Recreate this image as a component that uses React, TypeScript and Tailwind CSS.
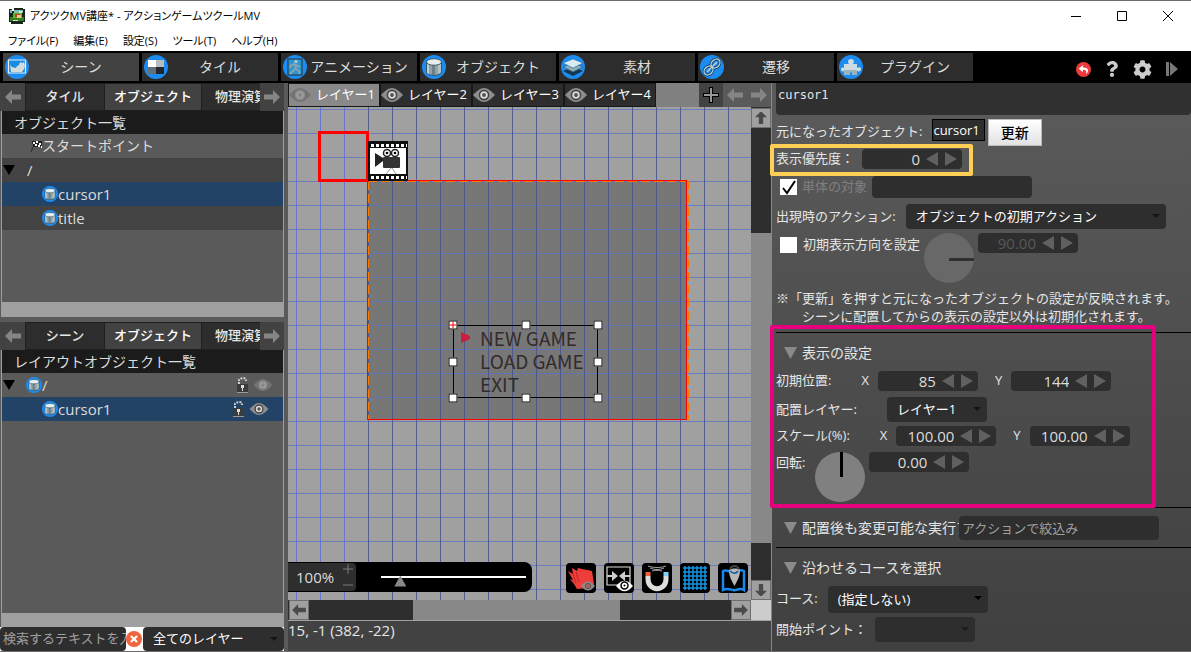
import { ReactNode, useState } from "react";
import { Minus, Plus, X } from "lucide-react";
import { FaCog, FaPuzzlePiece, FaQuestion, FaReply } from "react-icons/fa";

const TREE_ROW = "flex h-6 items-center pl-px text-[15px]";

function AppLogo() {
  return (
    <svg viewBox="0 0 16 16" className="size-4" shapeRendering="crispEdges">
      <path fill="#18251c" d="M0 1h3v2h2V0h9v1h2v13h-2v2H2v-2H0z" />
      <path fill="#7dbcae" d="M1 2h2v3h2V2h9v3H1z" />
      <path fill="#35801f" d="M1 9h14v4H1z" />
      <path fill="#63b52d" d="M4 5h9v5H4z" />
      <path fill="#c73a22" d="M6 6h5v3H6z" />
      <path fill="#f2c991" d="M8 7h4v3H8z" />
      <path fill="#e7e3c8" d="M10 3h3v2h-3zM4 12h5v1H4z" />
    </svg>
  );
}

function Cylinder({ className }: { className: string }) {
  return (
    <svg viewBox="0 0 24 24" className={className}>
      <circle cx="12" cy="12" r="12" fill="#1d8cf0" />
      <path d="M4.500 7v10c0 4.500 15 4.500 15 0V7z" fill="#8fa3a9" stroke="#2b4656" strokeWidth=".8" />
      <path d="M5 9v8c0 1 1 1.700 2 2V9.500z" fill="#c3d0d3" />
      <path d="M10 10v10h3V10z" fill="#6c8087" />
      <path d="M16 10v9l3-2V8z" fill="#b4c3c7" />
      <ellipse cx="12" cy="7" rx="7.500" ry="3.200" fill="#e6eef0" stroke="#2b4656" strokeWidth=".8" />
    </svg>
  );
}

function Disc({ children }: { children: ReactNode }) {
  return (
    <svg viewBox="0 0 24 24" className="size-6 shrink-0">
      <circle cx="12" cy="12" r="12" fill="#1d8cf0" />
      {children}
    </svg>
  );
}

function Eye({ className = "h-[14px] w-5", dim = false }: { className?: string; dim?: boolean }) {
  return (
    <svg viewBox="0 0 22 14" className={className}>
      <path d="M0 7C4 3 7 0 11 0s7 3 11 7c-4 4-7 7-11 7S4 11 0 7z" fill={dim ? "#747474" : "#8d8d8d"} />
      <circle cx="11" cy="7" r="4.500" fill={dim ? "#9c9c9c" : "#dcdcdc"} stroke={dim ? "#8a8a8a" : "#3a3a3a"} strokeWidth="1.400" />
      <circle cx="11" cy="7" r="2" fill={dim ? "#868686" : "#555"} />
    </svg>
  );
}

function Lock() {
  return (
    <svg viewBox="0 0 13 16" className="h-4 w-[13px]">
      <path d="M3 7V3c0-2 7-3 7 0v1" fill="none" stroke="#cfcfcf" strokeWidth="2" strokeDasharray="2 1" />
      <path d="M1 7h11v8H1z" fill="#3b3b3b" />
      <path d="M1 15.500h11" stroke="#999" />
      <path d="M5 8h3v3H7v3H6v-3H5z" fill="#ddd" />
    </svg>
  );
}

function BlockArrow({ className, rotate = 0 }: { className: string; rotate?: number }) {
  return (
    <svg viewBox="0 0 16 14" className={className}>
      <path d="M16 4.500v5H7V14L0 7l7-7v4.500z" fill="currentColor" transform={`rotate(${rotate} 8 7)`} />
    </svg>
  );
}

const MODES = [
  {
    label: "シーン",
    icon: (
      <Disc>
        <path d="M3.500 5h17v13h-17z" fill="#168ce4" stroke="#e7edf0" strokeWidth="1.200" />
        <path d="M5 10l2 2 4 1 1-2 2-1 1-3 2 1 2-1 1 4-1 3-2 3H6z" fill="#d5dadb" />
      </Disc>
    ),
  },
  {
    label: "タイル",
    icon: (
      <Disc>
        <path d="M4 5h8v7H4z" fill="#fff" />
        <path d="M12 5h8v7h-8z" fill="#b9bdc0" />
        <path d="M4 12h8v7H4z" fill="#647078" />
        <path d="M12 12h8v7h-8z" fill="#20282e" />
      </Disc>
    ),
  },
  {
    label: "アニメーション",
    icon: (
      <Disc>
        <path d="M5 4h14v16H5z" fill="#2596d8" stroke="#24506f" strokeWidth="1.500" />
        <circle cx="13" cy="6.500" r="1.800" fill="#b0c4c8" />
        <path d="M12 9l-4 1-1 3M12 9l1 5 3 2v3M13 13l-3 3-3 3M13 10l4 2" fill="none" stroke="#89a4ac" strokeWidth="2" />
      </Disc>
    ),
  },
  { label: "オブジェクト", icon: <Cylinder className="size-6 shrink-0" /> },
  {
    label: "素材",
    icon: (
      <Disc>
        <path d="M2 16l10-4 10 4-10 5z" fill="#15364f" />
        <path d="M2 12l10-4 10 4-10 5z" fill="#8fa9b5" stroke="#1d5c8c" strokeWidth=".6" />
        <path d="M2 8l10-4 10 4-10 5z" fill="#dcebf1" stroke="#1d6cac" strokeWidth=".6" />
      </Disc>
    ),
  },
  {
    label: "遷移",
    icon: (
      <Disc>
        <g fill="none" stroke="#123e60" strokeWidth="3">
          <ellipse cx="15.500" cy="8.500" rx="5" ry="3.800" transform="rotate(-45 15.500 8.500)" />
          <ellipse cx="8.500" cy="15.500" rx="5" ry="3.800" transform="rotate(-45 8.500 15.500)" />
        </g>
        <g fill="none" stroke="#b9d0da" strokeWidth="1.400">
          <ellipse cx="15.500" cy="8.500" rx="5" ry="3.800" transform="rotate(-45 15.500 8.500)" />
          <ellipse cx="8.500" cy="15.500" rx="5" ry="3.800" transform="rotate(-45 8.500 15.500)" />
          <path d="M7 17L17 7" />
        </g>
      </Disc>
    ),
  },
  {
    label: "プラグイン",
    icon: (
      <Disc>
        <path
          d="M5 9h5c-1-1-2-5 2-5s3 4 2 5h4v4c2-1 4-1 4 1s-2 3-4 2v4h-5c1-2 0-3-1-3s-2 1-1 3H5v-4c-2 1-3 0-3-1.500S3 12 5 13z"
          fill="#cddce1"
        />
        <path d="M5 15h13v5h-5c1-2 0-3-1-3s-2 1-1 3H5z" fill="#9db3bb" />
      </Disc>
    ),
  },
];

function TabStrip({ first }: { first: string }) {
  return (
    <div className="flex h-7 shrink-0 bg-[#1c2022] text-[13px] font-medium text-[#e6e6e6]">
      <button aria-label="前へ" className="flex w-[25px] shrink-0 items-center justify-center bg-[#424242] text-[#858585]">
        <BlockArrow className="h-[14px] w-4" />
      </button>
      <div className="flex min-w-0 flex-1 gap-px overflow-hidden py-px pl-px">
        <button className="w-[78px] shrink-0 bg-[#2d2d2d]">{first}</button>
        <button className="w-24 shrink-0 bg-[#424242] text-white">オブジェクト</button>
        <button className="w-[78px] shrink-0 bg-[#2d2d2d] whitespace-nowrap">物理演算</button>
      </div>
      <button aria-label="次へ" className="flex w-6 shrink-0 items-center justify-center bg-[#424242] text-[#858585]">
        <BlockArrow className="h-[14px] w-4" rotate={180} />
      </button>
    </div>
  );
}

function Twisty() {
  return (
    <svg viewBox="0 0 12 10" className="h-[10px] w-3 shrink-0">
      <path d="M0 0h12L6 10z" />
    </svg>
  );
}

function Select({
  label,
  id,
  value,
  className,
  arrow = "#141414",
}: {
  label?: string;
  id?: string;
  value: string;
  className: string;
  arrow?: string;
}) {
  return (
    <span className={`relative flex ${className}`}>
      <select
        id={id}
        aria-label={label}
        className="w-full appearance-none rounded bg-[#2e2e2e] pr-5 pl-[10px] text-[13px] text-white"
      >
        <option>{value}</option>
      </select>
      <svg viewBox="0 0 8 4" className="pointer-events-none absolute top-[10px] right-[6px] h-1 w-2">
        <path d="M0 0h8L4 4z" fill={arrow} />
      </svg>
    </span>
  );
}

function LeftPanel() {
  return (
    <aside className="flex w-[284px] shrink-0 flex-col bg-[#5a5a5a] text-[#dcdcdc]">
      <section className="flex h-[234px] shrink-0 flex-col">
        <TabStrip first="タイル" />
        <div className="ml-px flex flex-1 flex-col border-x border-[#a0a0a0]">
          <h2 className="flex h-[23px] items-center bg-[#1b1b1b] pl-3 text-sm">オブジェクト一覧</h2>
          <ul className="flex-1 bg-[#5a5a5a]">
            <li className="flex h-6 items-center pl-[29px] text-sm">
              <svg viewBox="0 0 11 11" className="size-[11px]" shapeRendering="crispEdges">
                <path d="M1 0h10v6H2z" fill="#222" />
                <path d="M2 1h2v2H2zM5 0h2v2H5zM8 2h2v2H8zM4 3h2v2H4zM7 4h2v2H7zM10 5h1v2h-1z" fill="#fff" />
                <path d="M2 6L0 11" stroke="#333" />
              </svg>
              スタートポイント
            </li>
            <li className={`${TREE_ROW} bg-[#434343]`}>
              <Twisty />
              <span className="pl-3">/</span>
            </li>
            <li className={`${TREE_ROW} bg-[#224366]`}>
              <Cylinder className="ml-[39px] size-4" />
              cursor1
            </li>
            <li className={`${TREE_ROW} bg-[#434343]`}>
              <Cylinder className="ml-[39px] size-4" />
              title
            </li>
          </ul>
          <div className="h-[15px] bg-[#a0a0a0]" />
        </div>
      </section>

      <section className="mt-[5px] flex min-h-0 flex-1 flex-col">
        <TabStrip first="シーン" />
        <div className="ml-px flex flex-1 flex-col border-x border-[#a0a0a0]">
          <h2 className="flex h-[23px] items-center bg-[#1b1b1b] pl-3 text-sm">レイアウトオブジェクト一覧</h2>
          <ul className="flex-1 bg-[#5a5a5a]">
            <li className={`${TREE_ROW} pr-[10px]`}>
              <Twisty />
              <Cylinder className="ml-[11px] size-4" />
              <span className="flex-1">/</span>
              <Lock />
              <Eye className="ml-1 h-3 w-5" dim />
            </li>
            <li className={`${TREE_ROW} bg-[#224366] pr-[14px]`}>
              <Cylinder className="ml-[39px] size-4" />
              <span className="flex-1">cursor1</span>
              <Lock />
              <Eye className="ml-1 h-3 w-5" />
            </li>
          </ul>
          <div className="h-[14px] bg-[#a0a0a0]" />
        </div>
      </section>

      <div className="flex h-6 shrink-0 bg-white text-[13px]">
        <input
          aria-label="検索"
          placeholder="検索するテキストを入力"
          className="w-[126px] rounded bg-[#2e2e2e] pl-[3px] placeholder:text-[#a0a0a0]"
        />
        <button aria-label="クリア" className="my-auto flex size-4 shrink-0 items-center justify-center rounded-full bg-[#f0663c]">
          <X className="size-[10px] text-white" strokeWidth={5} />
        </button>
        <Select label="レイヤーの絞込み" value="全てのレイヤー" className="ml-px h-6 flex-1" />
      </div>
    </aside>
  );
}

function Spin({ label, id, value, disabled = false }: { label?: string; id?: string; value: string; disabled?: boolean }) {
  const [text, setText] = useState(value);
  return (
    <span className="flex h-5 w-[100px] shrink-0 items-center rounded bg-[#2e2e2e] pr-[5px]">
      <input
        id={id}
        aria-label={label}
        value={text}
        disabled={disabled}
        onChange={(e) => setText(e.target.value)}
        className="w-full min-w-0 flex-1 text-right text-[15px] leading-5 text-[#dcdcdc] disabled:text-[#585858]"
      />
      <button aria-label="減らす" className="ml-[6px] shrink-0">
        <svg viewBox="0 0 12 14" className="h-[14px] w-3">
          <path d="M12 0v14L0 7z" fill="#606060" />
        </svg>
      </button>
      <button aria-label="増やす" className="ml-[7px] shrink-0">
        <svg viewBox="0 0 12 14" className="h-[14px] w-3">
          <path d="M0 0v14l12-7z" fill="#606060" />
        </svg>
      </button>
    </span>
  );
}

function Axis({ id, name, value }: { id: string; name: string; value: string }) {
  return (
    <span className="flex items-center gap-[9px]">
      <label htmlFor={id}>{name}</label>
      <Spin id={id} value={value} />
    </span>
  );
}

function Check({ id, checked = false }: { id: string; checked?: boolean }) {
  return (
    <span className="relative flex">
      <input id={id} type="checkbox" defaultChecked={checked} className="peer h-4 w-[17px] appearance-none bg-white" />
      <svg viewBox="0 0 17 16" className="pointer-events-none absolute inset-0 hidden h-4 w-[17px] peer-checked:block">
        <path d="M3 9l4 5L15 2" fill="none" stroke="#000" strokeWidth="2" />
      </svg>
    </span>
  );
}

function Heading({ children }: { children: ReactNode }) {
  return (
    <h3 className="flex shrink-0 items-center gap-[5px] pl-2 text-sm">
      <svg viewBox="0 0 13 12" className="h-3 w-[13px] shrink-0">
        <path d="M0 0h13L6.500 12z" fill="#8a8a8a" />
      </svg>
      {children}
    </h3>
  );
}

function Inspector() {
  return (
    <aside className="flex w-[419px] shrink-0 flex-col bg-linear-to-b from-[#5b5b5b] to-[#404040] pl-1 text-[13px] whitespace-nowrap text-[#e6e6e6]">
      <input
        aria-label="名前"
        defaultValue="cursor1"
        className="h-8 shrink-0 rounded-b bg-[#303030] pb-2 pl-[2px] font-['DejaVu_Sans_Mono',monospace] text-xs"
      />
      <div className="mt-1 flex h-[27px] shrink-0 items-start">
        <span className="mr-[10px] leading-6">元になったオブジェクト:</span>
        <a href="#cursor1" className="h-[22px] border border-black bg-[#2e2e2e] pr-1 leading-5 text-white">
          cursor1
        </a>
        <button className="ml-[3px] h-[27px] w-[54px] border border-[#bbb] bg-linear-to-b from-white to-[#e2e2e2] text-sm font-medium text-black">
          更新
        </button>
      </div>

      <div className="relative flex h-[30px] shrink-0 items-center gap-2 pb-1">
        <label htmlFor="priority">表示優先度：</label>
        <Spin id="priority" value="0" />
        <div className="pointer-events-none absolute -top-[2px] -left-[6px] h-8 w-[203px] rounded-xs border-4 border-[#ffcf56]" />
      </div>
      <div className="flex h-[22px] shrink-0 items-center pl-1">
        <Check id="single" checked />
        <label htmlFor="single" className="mx-[5px] text-[#808080]">
          単体の対象
        </label>
        <input aria-label="単体の対象" disabled className="h-[22px] w-40 rounded bg-[#2e2e2e]" />
      </div>
      <div className="mt-[6px] flex h-[25px] shrink-0 items-center gap-[10px]">
        <label htmlFor="action">出現時のアクション:</label>
        <Select id="action" value="オブジェクトの初期アクション" className="h-[25px] w-[260px]" />
      </div>
      <div className="mt-1 flex h-[50px] shrink-0 items-start pl-1">
        <div className="flex h-6 items-center gap-[6px]">
          <Check id="direction" />
          <label htmlFor="direction">初期表示方向を設定</label>
        </div>
        <svg viewBox="0 0 50 50" className="mx-1 size-[50px]">
          <circle cx="25" cy="25" r="25" fill="#686868" />
          <path d="M25 26.500h25" stroke="#303030" strokeWidth="3" />
        </svg>
        <Spin label="初期表示方向" value="90.00" disabled />
      </div>
      <p className="mt-[6px] shrink-0 leading-[18px]">
        ※「更新」を押すと元になったオブジェクトの設定が反映されます。
        <br />
        <span className="pl-[26px]">シーンに配置してからの表示の設定以外は初期化されます。</span>
      </p>

      <section className="relative mt-[7px] flex h-[175px] shrink-0 flex-col border-t border-black pt-[10px]">
        <Heading>表示の設定</Heading>
        <div className="mt-2 flex h-5 items-center">
          <span className="mr-[30px]">初期位置:</span>
          <div className="flex gap-[17px]">
            <Axis id="pos-x" name="X" value="85" />
            <Axis id="pos-y" name="Y" value="144" />
          </div>
        </div>
        <div className="mt-[6px] flex h-[25px] items-center gap-[30px]">
          <label htmlFor="layer">配置レイヤー:</label>
          <Select id="layer" value="レイヤー1" className="h-[25px] w-[100px]" />
        </div>
        <div className="mt-1 flex h-5 items-center">
          <span className="mr-[30px]">スケール(%):</span>
          <div className="flex gap-[17px]">
            <Axis id="scale-x" name="X" value="100.00" />
            <Axis id="scale-y" name="Y" value="100.00" />
          </div>
        </div>
        <div className="mt-[6px] flex items-start">
          <label htmlFor="rotation" className="mr-[10px] leading-5">
            回転:
          </label>
          <svg viewBox="0 0 50 50" className="mr-1 size-[50px]">
            <circle cx="25" cy="25" r="25" fill="#808080" />
            <path d="M26.500 0v25" stroke="#000" strokeWidth="3" />
          </svg>
          <Spin id="rotation" value="0.00" />
        </div>
        <div className="pointer-events-none absolute -top-2 -left-[6px] h-[183px] w-[386px] rounded-xs border-4 border-[#e6007e]" />
      </section>

      <section className="flex h-10 shrink-0 items-center border-t border-black">
        <div className="w-[183px] overflow-hidden">
          <Heading>配置後も変更可能な実行アクション</Heading>
        </div>
        <input
          aria-label="アクションで絞込み"
          placeholder="アクションで絞込み"
          className="h-6 w-[200px] rounded bg-[#2e2e2e] pl-[3px] placeholder:text-[#a0a0a0]"
        />
      </section>

      <section className="flex flex-col border-t border-black pt-[10px]">
        <Heading>沿わせるコースを選択</Heading>
        <div className="mt-2 flex items-start gap-[10px]">
          <label htmlFor="course" className="leading-6">
            コース:
          </label>
          <Select id="course" value="(指定しない)" className="h-[27px] w-40" arrow="#000" />
        </div>
        <div className="mt-1 flex items-start gap-2">
          <label htmlFor="start" className="leading-6">
            開始ポイント：
          </label>
          <Select id="start" value="" className="h-[25px] w-[100px]" arrow="#1c1c1c" />
        </div>
      </section>
    </aside>
  );
}

const HANDLES = [
  "left-0 top-0",
  "left-1/2 top-0",
  "left-full top-0",
  "left-0 top-1/2",
  "left-full top-1/2",
  "left-0 top-full",
  "left-1/2 top-full",
  "left-full top-full",
];

function Camera() {
  return (
    <svg viewBox="0 0 40 40" className="absolute top-[34px] left-20 size-10">
      <path d="M0 0h40v40H0z" fill="#111" />
      <path d="M2 7h36v26H2z" fill="#fff" />
      <path d="M3 4.500h36M3 36.500h36" stroke="#fff" strokeWidth="3" strokeDasharray="3 2" />
      <path d="M7 12l8 5v3l-8 6z" fill="#222" />
      <rect x="15" y="16" width="17" height="11" rx="1" fill="#333" />
      <g fill="#fff" stroke="#222" strokeWidth="1.500">
        <circle cx="19" cy="12" r="3.500" />
        <circle cx="27" cy="12" r="3.500" />
      </g>
      <circle cx="19" cy="12" r="1.300" />
      <circle cx="27" cy="12" r="1.300" />
      <path d="M23 27l-5 6M24 27l4 6" stroke="#999" />
    </svg>
  );
}

const TOOLS = [
  {
    label: "残像表示",
    icon: (
      <>
        <path d="M2 8l5 3-1-6 5 3 1-3 4 1 10 2 2 13-6 4-11 1-3-5-4-5 3 1z" fill="#ef3e3a" />
        <path d="M6 8l4 12M10 9l3 10" stroke="#8f1c1c" strokeWidth=".6" />
        <path d="M15 23c5-6 9-6 14 0-5 6-9 6-14 0z" fill="#8a8a8a" />
        <circle cx="22" cy="23" r="2.600" fill="#b7605c" stroke="#555" />
      </>
    ),
  },
  {
    label: "表示範囲",
    icon: (
      <>
        <path d="M3 4h23v18H3z" fill="none" stroke="#ddd" strokeWidth="1.200" />
        <path d="M3 12h5V8l6 5-6 5v-4H3zM26 12h-5V8l-6 5 6 5v-4h5z" fill="#ccc" />
        <path d="M12 23c6-7 11-7 17 0-6 7-11 7-17 0z" fill="#fff" />
        <circle cx="20.500" cy="22.500" r="3.500" fill="#fff" stroke="#000" strokeWidth="1.500" />
        <circle cx="20.500" cy="22.500" r="1" />
      </>
    ),
  },
  {
    label: "スナップ",
    icon: (
      <>
        <path d="M6 13v3c0 13 18 13 18 0v-3" fill="none" stroke="#ddd" strokeWidth="5" />
        <path d="M3.500 9h5v4h-5z" fill="#f0623c" />
        <path d="M21.500 9h5v4h-5z" fill="#7fd0fa" />
        <path d="M6 3c5 2 13 2 18 0M8 5c5 2 9 2 14 0M10 8c3-1 7-1 10 0" fill="none" stroke="#ccc" strokeWidth=".8" />
      </>
    ),
  },
  {
    label: "グリッド",
    icon: <path d="M5 3v24M9 3v24M13 3v24M17 3v24M21 3v24M25 3v24M3 5h24M3 9h24M3 13h24M3 17h24M3 21h24M3 25h24" stroke="#1593df" strokeWidth="1.500" />,
  },
  {
    label: "マップ",
    icon: (
      <>
        <path d="M5 8c4-2 7 2 11 1s6-3 10-1v19c-4-3-7 1-11 0s-6-2-10 0z" fill="none" stroke="#1789ed" strokeWidth="2.500" />
        <path d="M11 7c3-2 9-2 11 0 0 7-3 11-5.500 16C14 18 11 14 11 7z" fill="#b7b7b7" />
        <path d="M12 6c2-4 7-4 9 0" fill="none" stroke="#444" strokeWidth="2" />
        <path d="M12 8c3 3 6 3 8 0" fill="none" stroke="#0d5b9e" strokeWidth="1.500" />
      </>
    ),
  },
];

const SCROLL_BUTTON = "flex size-5 shrink-0 items-center justify-center border border-[#6e6e6e] bg-[#a0a0a0] text-[#4a4a4a]";

function SceneView() {
  return (
    <main className="flex min-w-0 flex-1 flex-col">
      <div className="flex h-6 shrink-0 bg-[#808080] text-[13px] text-white">
        <div className="flex gap-[2px] bg-[#14181a] p-px">
          {["レイヤー1", "レイヤー2", "レイヤー3", "レイヤー4"].map((name, i) => (
            <button
              key={name}
              className={
                i === 0
                  ? "flex w-[90px] items-center justify-between bg-[#898989] pr-1 whitespace-nowrap"
                  : "flex w-[90px] items-center justify-between bg-[#2d2d2d] pr-1 whitespace-nowrap"
              }
            >
              <Eye className="h-[14px] w-[22px]" dim={i === 0} />
              {name}
            </button>
          ))}
        </div>
        <button aria-label="追加" className="ml-auto flex w-6 items-center justify-center bg-[#424242]">
          <svg viewBox="0 0 16 16" className="size-4" shapeRendering="crispEdges">
            <path d="M8 0v16M0 8h16" stroke="#000" strokeWidth="4" />
            <path d="M8 1v14M1 8h14" stroke="#999" strokeWidth="2" />
          </svg>
        </button>
        <button aria-label="前のレイヤー" className="flex w-6 items-center justify-center bg-[#5a5a5a] text-[#858585]">
          <BlockArrow className="h-[14px] w-4" />
        </button>
        <button aria-label="次のレイヤー" className="flex w-6 items-center justify-center bg-[#5a5a5a] text-[#858585]">
          <BlockArrow className="h-[14px] w-4" rotate={180} />
        </button>
      </div>

      <div className="flex min-h-0 flex-1">
        <div className="relative min-w-0 flex-1 overflow-hidden bg-[#a0a0a0]">
          <div className="absolute top-[73px] left-[79px] h-60 w-80 bg-[#777]" />
          <svg className="absolute inset-0 size-full" shapeRendering="crispEdges">
            <defs>
              <pattern id="rows" x="0" y="2" width="24" height="24" patternUnits="userSpaceOnUse">
                <path d="M0 0h24v1H0z" fill="#5a70c8" fillOpacity=".75" />
              </pattern>
              <pattern id="cols" x="8" y="0" width="24" height="24" patternUnits="userSpaceOnUse">
                <path d="M0 0h1v24H0z" fill="#5a6edc" fillOpacity=".8" />
              </pattern>
              <pattern id="scene-cols" x="8" y="0" width="24" height="24" patternUnits="userSpaceOnUse">
                <path d="M0 0h1v24H0z" fill="#46548c" fillOpacity=".85" />
              </pattern>
            </defs>
            <rect width="100%" height="100%" fill="url(#rows)" />
            <rect width="79" height="100%" fill="url(#cols)" />
            <rect x="79" width="100%" height="100%" fill="url(#scene-cols)" />
            <g fill="none">
              <path d="M80.500 74v239M400.500 74v239M80 74.500h319" stroke="#ff7800" strokeWidth="1" strokeDasharray="9 4" />
              <path d="M79.500 312.500v-239h319v239z" stroke="#f00" />
            </g>
          </svg>
          <div className="absolute top-6 left-[30px] size-[51px] border-3 border-[#f00]" />
          <Camera />

          <div className="absolute top-[218px] left-[165px] h-[73px] w-[145px] border border-black">
            <svg viewBox="0 0 9 11" className="absolute top-[6px] left-[7px] h-[11px] w-[9px]">
              <path d="M0 0l9 4v3l-9 4z" fill="#c91f3c" />
            </svg>
            <p className="pl-[26px] font-['Noto_Sans_CJK_JP',sans-serif] text-[19px] leading-[23px] whitespace-nowrap text-[#332b2b]">
              NEW GAME
              <br />
              LOAD GAME
              <br />
              EXIT
            </p>
            <div className="absolute -inset-px">
              {HANDLES.map((pos) => (
                <span key={pos} className={`absolute size-[9px] -translate-1/2 border border-black bg-white ${pos}`} />
              ))}
              <svg viewBox="0 0 9 9" className="absolute top-0 left-0 size-[9px] -translate-1/2">
                <path d="M4.500 1v7M1 4.500h7" stroke="#f00" />
              </svg>
            </div>
          </div>

          <div className="absolute bottom-2 left-0 flex h-[30px] w-[244px] items-center rounded-r-lg bg-black">
            <div className="flex h-7 w-[68px] items-center rounded-r bg-[#2e2e2e] pl-2 text-[#dcdcdc]">
              <input aria-label="ズーム" defaultValue="100%" className="w-11 text-[15px]" />
              <div className="flex flex-col text-[#a0a0a0]">
                <button aria-label="拡大">
                  <Plus className="size-4" strokeWidth={1} />
                </button>
                <button aria-label="縮小">
                  <Minus className="size-4" strokeWidth={1} />
                </button>
              </div>
            </div>
            <input
              type="range"
              aria-label="倍率"
              min={0}
              max={100}
              defaultValue={10}
              className="ml-[25px] h-6 w-[145px] appearance-none bg-[linear-gradient(#fff,#fff)] bg-[size:100%_2px] bg-center bg-no-repeat [&::-webkit-slider-thumb]:mt-2 [&::-webkit-slider-thumb]:h-[11px] [&::-webkit-slider-thumb]:w-3 [&::-webkit-slider-thumb]:appearance-none [&::-webkit-slider-thumb]:bg-[#888] [&::-webkit-slider-thumb]:[clip-path:polygon(50%_0,100%_100%,0_100%)]"
            />
          </div>
          <div className="absolute right-[3px] bottom-[7px] flex gap-2">
            {TOOLS.map((tool) => (
              <button key={tool.label} aria-label={tool.label} className="size-[30px] rounded-sm bg-black">
                <svg viewBox="0 0 30 30" className="size-[30px]">
                  {tool.icon}
                </svg>
              </button>
            ))}
          </div>
        </div>

        <div className="flex w-5 flex-col bg-[#2e2e2e] pt-px">
          <button aria-label="上へ" className={SCROLL_BUTTON}>
            <BlockArrow className="h-3 w-[14px]" rotate={90} />
          </button>
          <div className="flex flex-1 flex-col pt-[105px] pb-[37px]">
            <div className="flex-1 bg-[#888]" />
          </div>
          <button aria-label="下へ" className={SCROLL_BUTTON}>
            <BlockArrow className="h-3 w-[14px]" rotate={-90} />
          </button>
        </div>
      </div>

      <div className="flex h-5 shrink-0 bg-[#2e2e2e] pl-px">
        <button aria-label="左へ" className={SCROLL_BUTTON}>
          <BlockArrow className="h-3 w-[14px]" />
        </button>
        <div className="flex flex-1 pr-[111px] pl-[104px]">
          <div className="flex-1 bg-[#888]" />
        </div>
        <button aria-label="右へ" className={SCROLL_BUTTON}>
          <BlockArrow className="h-3 w-[14px]" rotate={180} />
        </button>
        <div className="w-5 bg-[#ccc]" />
      </div>
      <div className="h-[31px] shrink-0 border-t border-[#a0a0a0] bg-[#424242] text-[15px] leading-[18px] text-[#e6e6e6]">
        15, -1 (382, -22)
      </div>
    </main>
  );
}

const WINDOW_BUTTONS = [
  { label: "最小化", path: "M0 5.500h10" },
  { label: "最大化", path: "M.500.500h9v9h-9z" },
  { label: "閉じる", path: "M0 0l10 10M10 0L0 10" },
];

export default function App() {
  return (
    <div className="flex h-screen min-h-[652px] flex-col border-y border-[#6e6a6a] bg-[#5a5a5a] font-['Open_Sans','Noto_Sans_CJK_JP',sans-serif]">
      <header className="h-[50px] shrink-0 bg-white text-[11px] text-black [font-feature-settings:'palt']">
        <div className="flex h-[30px] items-center pl-[9px]">
          <AppLogo />
          <h1 className="flex-1 pl-[5px]">アクツクMV講座* - アクションゲームツクールMV</h1>
          {WINDOW_BUTTONS.map((b) => (
            <button key={b.label} aria-label={b.label} className="flex w-[46px] justify-center">
              <svg viewBox="0 0 10 10" className="size-[10px]">
                <path d={b.path} fill="none" stroke="#000" />
              </svg>
            </button>
          ))}
        </div>
        <nav className="flex h-5 items-center gap-[15px] pl-2">
          {["ファイル(F)", "編集(E)", "設定(S)", "ツール(T)", "ヘルプ(H)"].map((m) => (
            <button key={m}>{m}</button>
          ))}
        </nav>
      </header>

      <div className="flex h-8 shrink-0 items-center gap-[3px] bg-black pl-[3px]">
        {MODES.map((mode, i) => (
          <button
            key={mode.label}
            className={
              i === 0
                ? "flex h-7 w-[136px] items-center bg-[#424242] pr-[6px] pl-[2px] text-sm text-[#dcdcdc]"
                : "flex h-7 w-[136px] items-center bg-[#2d2d2d] pr-[6px] pl-[2px] text-sm text-[#dcdcdc]"
            }
          >
            {mode.icon}
            <span className="flex-1 whitespace-nowrap">{mode.label}</span>
          </button>
        ))}
        <div className="ml-auto flex items-center gap-[14px] pt-1 pr-[13px]">
          <button aria-label="元に戻す" className="flex size-[15px] items-center justify-center rounded-full bg-[#ee3b3b]">
            <FaReply className="size-[9px] text-white" />
          </button>
          <button aria-label="ヘルプ">
            <FaQuestion className="h-4 w-[14px] text-[#ccc]" />
          </button>
          <button aria-label="設定">
            <FaCog className="size-[19px] text-[#ccc]" />
          </button>
          <button aria-label="実行">
            <svg viewBox="0 0 12 14" className="h-[14px] w-3">
              <path d="M0 0h3v14H0zM4 0l8 7-8 7z" fill="#777" />
            </svg>
          </button>
        </div>
      </div>

      <div className="flex min-h-0 flex-1">
        <LeftPanel />
        <div className="w-1 shrink-0 bg-[#5a5a5a]" />
        <SceneView />
        <div className="w-px shrink-0 bg-[#888]" />
        <Inspector />
      </div>
    </div>
  );
}
